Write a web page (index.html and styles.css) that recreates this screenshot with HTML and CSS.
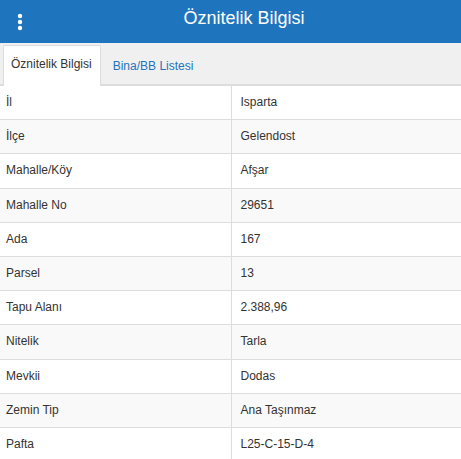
FILE: index.html
```html
<!DOCTYPE html>
<html lang="tr">
<head>
<meta charset="utf-8">
<title>Öznitelik Bilgisi</title>
<link rel="stylesheet" href="styles.css">
</head>
<body>
<header class="topbar">
  <button class="menu-btn" aria-label="Menü">
    <svg width="6" height="18" viewBox="0 0 6 18"><circle cx="3" cy="3" r="2.2" fill="#fff"/><circle cx="3" cy="9" r="2.2" fill="#fff"/><circle cx="3" cy="15" r="2.2" fill="#fff"/></svg>
  </button>
  <h1 class="title">Öznitelik Bilgisi</h1>
</header>
<nav class="tabs">
  <a class="tab active">Öznitelik Bilgisi</a>
  <a class="tab">Bina/BB Listesi</a>
</nav>
<table class="attr">
  <tbody>
    <tr><td>İl</td><td>Isparta</td></tr>
    <tr><td>İlçe</td><td>Gelendost</td></tr>
    <tr><td>Mahalle/Köy</td><td>Afşar</td></tr>
    <tr><td>Mahalle No</td><td>29651</td></tr>
    <tr><td>Ada</td><td>167</td></tr>
    <tr><td>Parsel</td><td>13</td></tr>
    <tr><td>Tapu Alanı</td><td>2.388,96</td></tr>
    <tr><td>Nitelik</td><td>Tarla</td></tr>
    <tr><td>Mevkii</td><td>Dodas</td></tr>
    <tr><td>Zemin Tip</td><td>Ana Taşınmaz</td></tr>
    <tr><td>Pafta</td><td>L25-C-15-D-4</td></tr>
  </tbody>
</table>
</body>
</html>
```
FILE: styles.css
```css
* { box-sizing: border-box; }
html, body {
  margin: 0;
  padding: 0;
  background: #fff;
  font-family: "Liberation Sans", Arial, sans-serif;
  font-size: 12px;
  color: #333;
  overflow: hidden;
}
.topbar {
  height: 43px;
  background: #1f75bd;
  display: flex;
  align-items: center;
}
.menu-btn {
  width: 40px;
  height: 43px;
  padding: 0;
  border: 0;
  background: transparent;
  display: flex;
  align-items: center;
  justify-content: center;
  padding-top: 0;
}
.title {
  flex: 1;
  margin: 0;
  padding-right: 13px;
  text-align: center;
  color: #fff;
  font-size: 18px;
  font-weight: normal;
  line-height: 43px;
  padding-bottom: 6px;
}
.tabs {
  height: 43px;
  background: #f0f0f0;
  border-bottom: 2px solid #ddd;
  display: flex;
  align-items: flex-end;
  padding-left: 3px;
}
.tab {
  display: block;
  height: 39px;
  line-height: 37px;
  padding: 0 8px 0 7px;
  margin-bottom: -2px;
  color: #1f75bd;
  border: 1px solid transparent;
  border-bottom: 0;
  margin-right: 4px;
}
.tab.active {
  background: #fff;
  color: #333;
  border-color: #ddd;
  border-radius: 2px 2px 0 0;
  height: 41px;
}
.attr {
  width: 100%;
  border-collapse: collapse;
}
.attr td {
  padding: 8px 8px 8px 6px;
  line-height: 17.2px;
  border-top: 1px solid #ddd;
  vertical-align: middle;
}
.attr tr:first-child td { border-top: 0; }
.attr td:first-child {
  width: 231px;
  border-right: 1px solid #ddd;
}
.attr td + td { padding-left: 9px; }
.attr tr:nth-child(even) td { background: #f9f9f9; }
```
